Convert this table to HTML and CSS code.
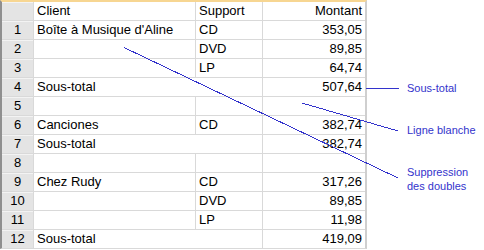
FILE: index.html
```html
<!DOCTYPE html>
<html lang="fr">
<head>
<meta charset="utf-8">
<title>Sous-totaux</title>
<link rel="stylesheet" href="styles.css">
</head>
<body>
<div class="canvas">
  <div class="sheet">
    <div class="rh"></div><div class="c">Client</div><div class="c">Support</div><div class="c num">Montant</div>
    <div class="rh">1</div><div class="c">Boîte à Musique d'Aline</div><div class="c">CD</div><div class="c num">353,05</div>
    <div class="rh">2</div><div class="c"></div><div class="c">DVD</div><div class="c num">89,85</div>
    <div class="rh">3</div><div class="c"></div><div class="c">LP</div><div class="c num">64,74</div>
    <div class="rh">4</div><div class="c span2">Sous-total</div><div class="c num">507,64</div>
    <div class="rh">5</div><div class="c"></div><div class="c"></div><div class="c num"></div>
    <div class="rh">6</div><div class="c">Canciones</div><div class="c">CD</div><div class="c num">382,74</div>
    <div class="rh">7</div><div class="c span2">Sous-total</div><div class="c num">382,74</div>
    <div class="rh">8</div><div class="c"></div><div class="c"></div><div class="c num"></div>
    <div class="rh">9</div><div class="c">Chez Rudy</div><div class="c">CD</div><div class="c num">317,26</div>
    <div class="rh">10</div><div class="c"></div><div class="c">DVD</div><div class="c num">89,85</div>
    <div class="rh">11</div><div class="c"></div><div class="c">LP</div><div class="c num">11,98</div>
    <div class="rh">12</div><div class="c span2">Sous-total</div><div class="c num">419,09</div>
  </div>
  <svg class="callouts" width="484" height="250" viewBox="0 0 484 250">
    <line x1="124" y1="47.5" x2="398" y2="178" />
    <line x1="366" y1="88.5" x2="399" y2="88.5" />
    <line x1="302" y1="103" x2="398" y2="131" />
  </svg>
  <div class="note note-subtotal">Sous-total</div>
  <div class="note note-blank">Ligne blanche</div>
  <div class="note note-dup">Suppression<br>des doubles</div>
</div>
</body>
</html>
```
FILE: styles.css
```css
html, body {
  margin: 0;
  padding: 0;
  background: #ffffff;
}

.canvas {
  position: relative;
  width: 484px;
  height: 250px;
  overflow: hidden;
  background: #ffffff;
  font-family: "Liberation Sans", Arial, sans-serif;
}

.sheet {
  display: grid;
  width: max-content;
  grid-template-columns: 31px 161px 66px 102px;
  grid-auto-rows: 18px;
  gap: 1px;
  background: #d9d9d9;
  border-top: 2px solid #f7d692;
  border-left: 2px solid #8f8f8f;
  border-right: 2px solid #cfcfcf;
  border-bottom: 1px solid #d9d9d9;
}

.rh {
  background: #e4e4e4;
  box-shadow: inset 0 1px 0 #f3f3f3;
  color: #000000;
  font-size: 13px;
  line-height: 18px;
  text-align: center;
}

.c {
  background: #ffffff;
  color: #000000;
  font-size: 13px;
  line-height: 18px;
  padding: 0 3px;
  white-space: nowrap;
  overflow: visible;
}

.num {
  text-align: right;
}

.span2 {
  grid-column: span 2;
}

.callouts {
  position: absolute;
  left: 0;
  top: 0;
  pointer-events: none;
}

.callouts line {
  stroke: #3333cc;
  stroke-width: 1;
  shape-rendering: crispEdges;
}

.note {
  position: absolute;
  left: 407px;
  color: #3333cc;
  font-size: 11px;
  line-height: 14px;
  white-space: nowrap;
}

.note-subtotal {
  top: 81px;
}

.note-blank {
  top: 123px;
}

.note-dup {
  top: 165px;
}
```
